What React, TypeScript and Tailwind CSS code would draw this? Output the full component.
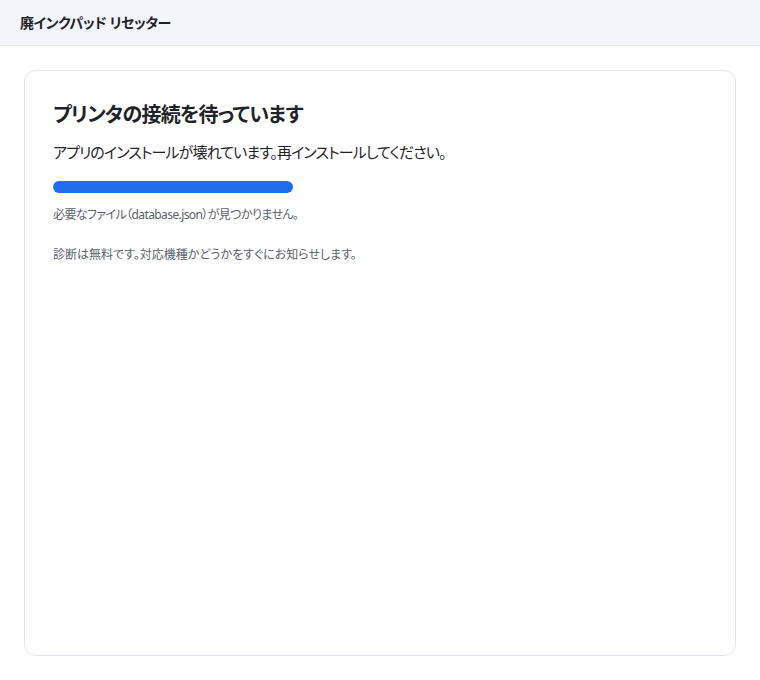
export default function App() {
  return (
    <div
      className="flex min-h-screen flex-col bg-white text-[#1f2328] [font-feature-settings:'palt']"
      style={{ fontFamily: '"Noto Sans", "Noto Sans CJK JP", sans-serif' }}
    >
      <header className="flex h-[46px] items-center border-b border-[#e3e7ee] bg-[#f2f5f9] px-5">
        <h1 className="text-sm font-bold tracking-[-0.03em] text-[#1f2328]">廃インクパッド リセッター</h1>
      </header>

      <main className="flex flex-1 flex-col p-6">
        <div className="flex-1 rounded-xl border border-[#e1e4ec] bg-white px-7 pb-7 pt-[30px]">
          <h2 className="text-xl font-bold leading-7 tracking-[-0.035em] text-[#1f2328]">
            プリンタの接続を待っています
          </h2>
          <p className="mt-[11px] text-[15px] leading-6 tracking-[-0.06em] text-[#1f2328]">
            アプリのインストールが壊れています。再インストールしてください。
          </p>
          <div className="mt-[17px] h-3 w-[240px] rounded-full bg-[#1f6feb]" />
          <p className="mt-3 text-xs leading-5 tracking-[-0.05em] text-[#57606a]">
            必要なファイル（database.json）が見つかりません。
          </p>
          <p className="mt-5 text-xs leading-5 text-[#57606a]">
            診断は無料です。対応機種かどうかをすぐにお知らせします。
          </p>
        </div>
      </main>
    </div>
  )
}
